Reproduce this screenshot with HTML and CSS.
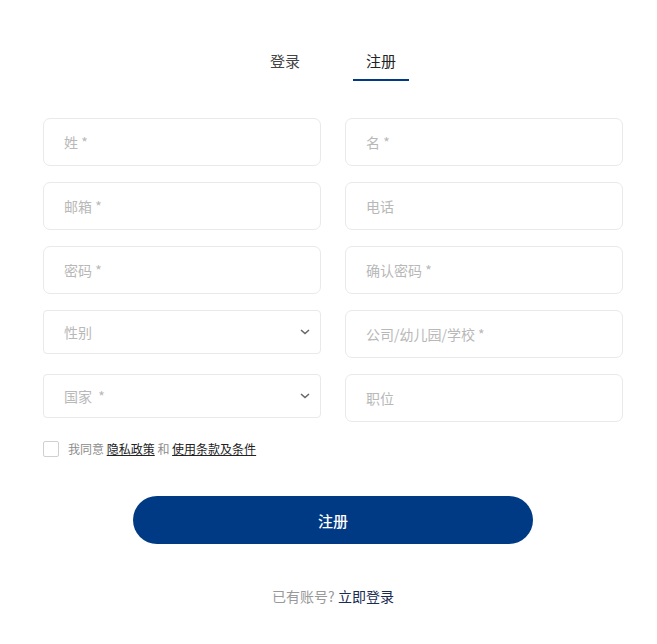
FILE: index.html
```html
<!DOCTYPE html>
<html lang="zh-CN">
<head>
<meta charset="utf-8">
<title>注册</title>
<link rel="stylesheet" href="styles.css">
</head>
<body>
<div class="page">
  <div class="tabs">
    <div class="tab">登录</div>
    <div class="tab active">注册</div>
  </div>
  <div class="grid">
    <input class="field" placeholder="姓 *">
    <input class="field" placeholder="名 *">
    <input class="field" placeholder="邮箱 *">
    <input class="field" placeholder="电话">
    <input class="field" placeholder="密码 *">
    <input class="field" placeholder="确认密码 *">
    <div class="select"><span>性别</span><svg class="chev" width="10" height="6" viewBox="0 0 10 6"><path d="M1 1 L5 4.6 L9 1" fill="none" stroke="#666" stroke-width="1.5"/></svg></div>
    <input class="field" placeholder="公司/幼儿园/学校 *">
    <div class="select"><span>国家&nbsp; *</span><svg class="chev" width="10" height="6" viewBox="0 0 10 6"><path d="M1 1 L5 4.6 L9 1" fill="none" stroke="#666" stroke-width="1.5"/></svg></div>
    <input class="field" placeholder="职位">
  </div>
  <div class="agree">
    <span class="box"></span>
    <span class="agree-text">我同意 <a class="link">隐私政策</a> 和 <a class="link">使用条款及条件</a></span>
  </div>
  <div class="btn-row"><button class="btn">注册</button></div>
  <div class="footer">已有账号? <a class="login">立即登录</a></div>
</div>
</body>
</html>
```
FILE: styles.css
```css
* { box-sizing: border-box; }
body {
  margin: 0;
  background: #fff;
  font-family: "Noto Sans CJK SC", "Noto Sans", sans-serif;
}
.page {
  width: 580px;
  margin-left: 43px;
  padding-top: 50px;
}
.tabs {
  display: flex;
  justify-content: center;
  gap: 40px;
}
.tab {
  width: 56px;
  text-align: center;
  font-size: 15px;
  line-height: 22px;
  color: #444;
  padding-bottom: 7px;
  border-bottom: 2px solid transparent;
}
.tab.active {
  border-bottom-color: #003a84;
  color: #222;
}
.grid {
  margin-top: 37px;
  display: grid;
  grid-template-columns: 278px 278px;
  column-gap: 24px;
  row-gap: 16px;
  grid-auto-rows: 48px;
  align-items: start;
}
.field {
  width: 100%;
  height: 48px;
  border: 1px solid #e9e9e9;
  border-radius: 7px;
  padding: 0 20px;
  font-family: inherit;
  font-size: 14px;
  color: #333;
  outline: none;
  background: #fff;
}
.field::placeholder { color: #b8b8b8; }
.select {
  height: 44px;
  border: 1px solid #e9e9e9;
  border-radius: 4px;
  padding: 0 10px 0 20px;
  display: flex;
  align-items: center;
  justify-content: space-between;
  font-size: 14px;
  color: #b8b8b8;
}
.agree {
  margin-top: 19px;
  display: flex;
  align-items: center;
  height: 16px;
}
.box {
  width: 16px;
  height: 16px;
  border: 1px solid #d0d0d0;
  border-radius: 2px;
  margin-right: 9px;
}
.agree-text {
  font-size: 12px;
  line-height: 14px;
  margin-top: -1px;
  color: #8c8c8c;
}
.link {
  color: #222;
  text-decoration: underline;
}
.btn-row {
  margin-top: 39px;
  display: flex;
  justify-content: center;
}
.btn {
  width: 400px;
  height: 48px;
  border: none;
  border-radius: 24px;
  background: #003a84;
  color: #fff;
  font-family: inherit;
  font-size: 15px;
  font-weight: 500;
}
.footer {
  margin-top: 42px;
  text-align: center;
  font-size: 14px;
  line-height: 20px;
  color: #999;
}
.login { color: #1a2b52; }
```
